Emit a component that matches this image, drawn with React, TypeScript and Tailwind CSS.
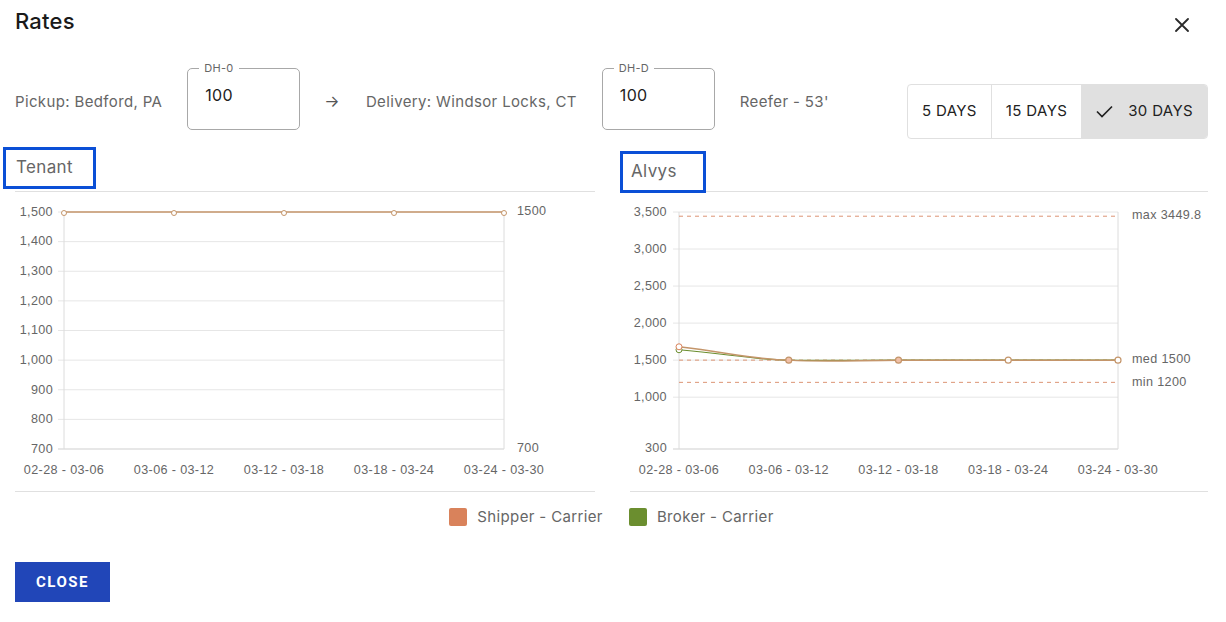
import React from "react";

const AX = "#666666";
const GRID = "#e6e6e6";
const LINE = "#c4956a";
const ORANGE = "#d9825b";
const GREEN = "#6b8e2f";
const DASH = "#dc9474";
const FS = "12.6";

const xLabels = ["02-28 - 03-06", "03-06 - 03-12", "03-12 - 03-18", "03-18 - 03-24", "03-24 - 03-30"];

function TenantChart() {
  const L = 49, R = 489, T = 20, B = 257;
  const yv = (v: number) => T + ((1500 - v) / 800) * (B - T);
  const ticks = [1500, 1400, 1300, 1200, 1100, 1000, 900, 800, 700];
  const xs = xLabels.map((_, i) => L + (i * (R - L)) / 4);
  return (
    <svg width="580" height="299" className="block" style={{ fontFamily: '"Liberation Sans", Arial, sans-serif' }}>
      {ticks.map((t) => (
        <g key={t}>
          <line x1={L - 6} x2={R} y1={yv(t)} y2={yv(t)} stroke={t === 700 ? "#cfcfcf" : GRID} strokeWidth="1" />
          <text x={38} y={yv(t) + 0.5} textAnchor="end" dominantBaseline="middle" fontSize={FS} fill={AX}>
            {t.toLocaleString("en-US")}
          </text>
        </g>
      ))}
      <line x1={L} x2={L} y1={T} y2={B} stroke="#dcdcdc" />
      <line x1={R} x2={R} y1={T} y2={B} stroke="#dcdcdc" />
      <text x={502} y={yv(1500)} dominantBaseline="middle" fontSize={FS} fill={AX}>1500</text>
      <text x={502} y={yv(700)} dominantBaseline="middle" fontSize={FS} fill={AX}>700</text>
      {xs.map((x, i) => (
        <text key={i} x={x} y={278.5} textAnchor="middle" dominantBaseline="middle" fontSize={FS} fill={AX}>
          {xLabels[i]}
        </text>
      ))}
      <line x1={L} x2={R} y1={yv(1500)} y2={yv(1500)} stroke={LINE} strokeWidth="1.5" />
      {xs.map((x, i) => (
        <circle key={i} cx={x} cy={yv(1500) + 1} r="2.5" fill="#fff" stroke={LINE} strokeWidth="1" />
      ))}
    </svg>
  );
}

function AlvysChart() {
  const L = 49, R = 488, T = 20, B = 257;
  const yv = (v: number) => T + ((3500 - v) / 3200) * (B - T);
  const ticks = [3500, 3000, 2500, 2000, 1500, 1000];
  const xs = xLabels.map((_, i) => L + (i * (R - L)) / 4);
  return (
    <svg width="578" height="299" className="block" style={{ fontFamily: '"Liberation Sans", Arial, sans-serif' }}>
      {ticks.map((t) => (
        <g key={t}>
          <line x1={L - 6} x2={R} y1={yv(t)} y2={yv(t)} stroke={GRID} strokeWidth="1" />
          <text x={37} y={yv(t) + 0.5} textAnchor="end" dominantBaseline="middle" fontSize={FS} fill={AX}>
            {t.toLocaleString("en-US")}
          </text>
        </g>
      ))}
      <line x1={L - 6} x2={R} y1={B} y2={B} stroke="#cfcfcf" />
      <text x={37} y={B} textAnchor="end" dominantBaseline="middle" fontSize={FS} fill={AX}>300</text>
      <line x1={L} x2={L} y1={T} y2={B} stroke="#dcdcdc" />
      <line x1={R} x2={R} y1={T} y2={B} stroke="#dcdcdc" />
      <line x1={L} x2={R} y1={yv(3449.8) + 0.5} y2={yv(3449.8) + 0.5} stroke={DASH} strokeDasharray="4 4" />
      <line x1={L} x2={R} y1={yv(1500)} y2={yv(1500)} stroke={DASH} strokeDasharray="4 4" />
      <line x1={L} x2={R} y1={yv(1200)} y2={yv(1200)} stroke={DASH} strokeDasharray="4 4" />
      <text x={502} y={yv(3449.8)} dominantBaseline="middle" fontSize={FS} fill={AX}>max 3449.8</text>
      <text x={502} y={yv(1500)} dominantBaseline="middle" fontSize={FS} fill={AX}>med 1500</text>
      <text x={502} y={yv(1200)} dominantBaseline="middle" fontSize={FS} fill={AX}>min 1200</text>
      {xs.map((x, i) => (
        <text key={i} x={x} y={278.5} textAnchor="middle" dominantBaseline="middle" fontSize={FS} fill={AX}>
          {xLabels[i]}
        </text>
      ))}
      <path
        d={`M${xs[0]} ${yv(1640)} C ${xs[0] + 50} ${yv(1580)}, ${xs[1] - 30} ${yv(1500)}, ${xs[1]} ${yv(1500)} C ${xs[1] + 40} ${yv(1490)}, ${xs[2] - 40} ${yv(1500)}, ${xs[2]} ${yv(1500)} L ${xs[4]} ${yv(1500)}`}
        fill="none"
        stroke={GREEN}
        strokeWidth="1.2"
      />
      <path
        d={`M${xs[0]} ${yv(1680)} C ${xs[0] + 50} ${yv(1600)}, ${xs[1] - 30} ${yv(1500)}, ${xs[1]} ${yv(1500)} C ${xs[1] + 40} ${yv(1470)}, ${xs[2] - 40} ${yv(1500)}, ${xs[2]} ${yv(1500)} L ${xs[4]} ${yv(1500)}`}
        fill="none"
        stroke={LINE}
        strokeWidth="1.5"
      />
      <circle cx={xs[0]} cy={yv(1640)} r="3" fill="#fff" stroke={GREEN} strokeWidth="1" />
      <circle cx={xs[0]} cy={yv(1680)} r="3" fill="#fff" stroke={ORANGE} strokeWidth="1" />
      {xs.slice(1).map((x, i) => (
        <circle key={i} cx={x} cy={yv(1500)} r="3" fill={i < 2 ? "#f0c0a8" : "#fff"} stroke={LINE} strokeWidth="1.2" />
      ))}
    </svg>
  );
}

function DhInput({ label }: { label: string }) {
  return (
    <div className="relative w-[113px] h-[62px] rounded-[5px] border border-[#a8a8a8] shrink-0">
      <span className="absolute -top-[8px] left-[11px] px-[5px] bg-white text-[11px] leading-[14px] text-[#666] tracking-[0.3px]">{label}</span>
      <div className="pl-[17px] pt-[15px] text-[16px] leading-[22px] text-[#222]">100</div>
    </div>
  );
}

export default function App() {
  return (
    <div
      className="w-[1226px] h-[622px] bg-white px-[15px] pr-[18px] overflow-hidden relative tracking-[0.36px]"
      style={{ fontFamily: 'Inter, "Noto Sans", sans-serif' }}
    >
      <div className="flex items-start justify-between pt-[6px]">
        <div className="text-[22px] leading-[30px] font-medium text-[#1a1a1a] tracking-[0.2px]">Rates</div>
        <svg width="14" height="14" viewBox="0 0 14 14" className="mt-[12px] mr-[19px]">
          <path d="M1 1 L13 13 M13 1 L1 13" stroke="#2a2a2a" strokeWidth="1.8" strokeLinecap="round" />
        </svg>
      </div>

      <div className="flex items-start gap-[25px] mt-[32px] text-[15px] text-[#666]">
        <div className="mt-[24px] leading-[20px]">Pickup: Bedford, PA</div>
        <DhInput label="DH-0" />
        <div className="mt-[23px] leading-[20px] text-[16px] text-[#555] -ml-[1px] mr-[1px]">→</div>
        <div className="mt-[24px] leading-[20px]">Delivery: Windsor Locks, CT</div>
        <DhInput label="DH-D" />
        <div className="mt-[24px] leading-[20px]">Reefer - 53'</div>
        <div className="ml-auto mt-[16px] flex h-[55px] rounded-[4px] border border-[#e0e0e0] text-[15px] text-[#222] overflow-hidden">
          <div className="flex items-center px-[14px] border-r border-[#e0e0e0]">5 DAYS</div>
          <div className="flex items-center px-[14px]">15 DAYS</div>
          <div className="flex items-center gap-[15px] pl-[15px] pr-[14px] bg-[#e0e0e0]">
            <svg width="17" height="13" viewBox="0 0 17 13">
              <path d="M1 6.5 L6 11.5 L16 1.5" fill="none" stroke="#222" strokeWidth="1.7" />
            </svg>
            <span>30 DAYS</span>
          </div>
        </div>
      </div>

      <div className="flex gap-[35px] mt-[6px]">
        <div className="w-[580px]">
          <div className="h-[47px] border-b border-[#e0e0e0] pt-[2px]">
            <div className="relative -ml-[12px] w-[93px] h-[42px] border-[3px] border-[#0b4fd6] pl-[10px] flex items-center text-[17px] text-[#666]">
              Tenant
            </div>
          </div>
          <div className="border-b border-[#e0e0e0]">
            <TenantChart />
          </div>
        </div>
        <div className="w-[578px]">
          <div className="h-[47px] border-b border-[#e0e0e0] pt-[6px]">
            <div className="relative -ml-[10px] w-[86px] h-[42px] border-[3px] border-[#0b4fd6] pl-[8px] flex items-center text-[17px] text-[#666]">
              Alvys
            </div>
          </div>
          <div className="border-b border-[#e0e0e0]">
            <AlvysChart />
          </div>
        </div>
      </div>

      <div className="flex justify-center items-center mt-[15px] text-[15px] leading-[20px] text-[#666]">
        <div className="flex items-center gap-[10px]">
          <span className="w-[18px] h-[18px] rounded-[2px] bg-[#d9825b]" />
          <span>Shipper - Carrier</span>
        </div>
        <div className="flex items-center gap-[10px] ml-[26px]">
          <span className="w-[18px] h-[18px] rounded-[2px] bg-[#6b8e2f]" />
          <span>Broker - Carrier</span>
        </div>
      </div>

      <button
        className="mt-[35px] w-[95px] h-[40px] bg-[#2146b8] text-white text-[15px] font-bold tracking-[1.5px] flex items-center justify-center"
        style={{ fontFamily: 'Roboto, "Liberation Sans", sans-serif' }}
      >
        CLOSE
      </button>
    </div>
  );
}
